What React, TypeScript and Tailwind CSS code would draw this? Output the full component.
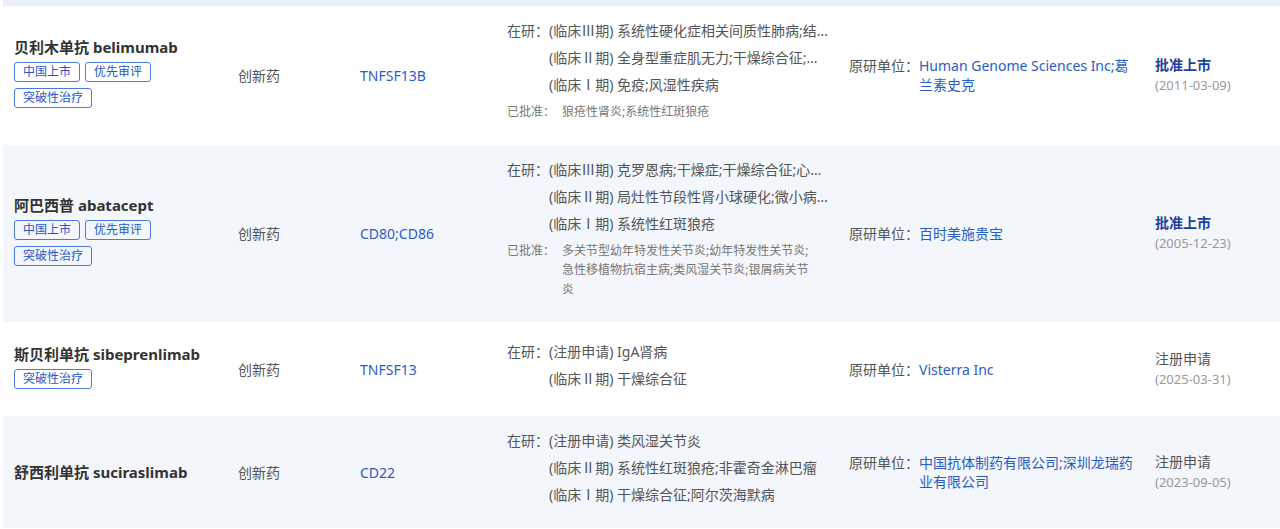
import React from "react";

type Row = {
  cn: string;
  en: string;
  tags: string[];
  type: string;
  target: string;
  research: string[];
  approved?: string;
  org: string;
  status: string;
  statusBold: boolean;
  date: string;
  bg: string;
};

const rows: Row[] = [
  {
    cn: "贝利木单抗",
    en: "belimumab",
    tags: ["中国上市", "优先审评", "突破性治疗"],
    type: "创新药",
    target: "TNFSF13B",
    research: [
      "(临床Ⅲ期) 系统性硬化症相关间质性肺病;结缔组织病相关间质性肺病",
      "(临床Ⅱ期) 全身型重症肌无力;干燥综合征;慢性淋巴细胞白血病",
      "(临床Ⅰ期) 免疫;风湿性疾病",
    ],
    approved: "狼疮性肾炎;系统性红斑狼疮",
    org: "Human Genome Sciences Inc;葛兰素史克",
    status: "批准上市",
    statusBold: true,
    date: "(2011-03-09)",
    bg: "bg-white",
  },
  {
    cn: "阿巴西普",
    en: "abatacept",
    tags: ["中国上市", "优先审评", "突破性治疗"],
    type: "创新药",
    target: "CD80;CD86",
    research: [
      "(临床Ⅲ期) 克罗恩病;干燥症;干燥综合征;心肌炎;溃疡性结肠炎",
      "(临床Ⅱ期) 局灶性节段性肾小球硬化;微小病变病;狼疮性肾炎",
      "(临床Ⅰ期) 系统性红斑狼疮",
    ],
    approved:
      "多关节型幼年特发性关节炎;幼年特发性关节炎;急性移植物抗宿主病;类风湿关节炎;银屑病关节炎",
    org: "百时美施贵宝",
    status: "批准上市",
    statusBold: true,
    date: "(2005-12-23)",
    bg: "bg-[#f3f6fb]",
  },
  {
    cn: "斯贝利单抗",
    en: "sibeprenlimab",
    tags: ["突破性治疗"],
    type: "创新药",
    target: "TNFSF13",
    research: ["(注册申请) IgA肾病", "(临床Ⅱ期) 干燥综合征"],
    org: "Visterra Inc",
    status: "注册申请",
    statusBold: false,
    date: "(2025-03-31)",
    bg: "bg-white",
  },
  {
    cn: "舒西利单抗",
    en: "suciraslimab",
    tags: [],
    type: "创新药",
    target: "CD22",
    research: [
      "(注册申请) 类风湿关节炎",
      "(临床Ⅱ期) 系统性红斑狼疮;非霍奇金淋巴瘤",
      "(临床Ⅰ期) 干燥综合征;阿尔茨海默病",
    ],
    org: "中国抗体制药有限公司;深圳龙瑞药业有限公司",
    status: "注册申请",
    statusBold: false,
    date: "(2023-09-05)",
    bg: "bg-[#f3f6fb]",
  },
];

function Tag({ label }: { label: string }) {
  return (
    <span className="inline-flex h-[20px] items-center rounded-[3px] border border-[#4a7ade] px-[8px] text-[12px] leading-none text-[#2557c8]">
      {label}
    </span>
  );
}

function DataRow({ r }: { r: Row }) {
  return (
    <div className={`flex min-h-[94px] items-center py-[13px] pl-[11px] ${r.bg}`}>
      <div className="w-[224px] shrink-0 pr-[24px]">
        <div className="text-[15px] font-bold leading-[22px] text-[#333]">
          {r.cn} {r.en}
        </div>
        {r.tags.length > 0 && (
          <div className="mt-[4px] mb-[6px] flex flex-wrap gap-x-[5px] gap-y-[6px]">
            {r.tags.map((t) => (
              <Tag key={t} label={t} />
            ))}
          </div>
        )}
      </div>
      <div className="w-[122px] shrink-0 text-[14px] text-[#555]">{r.type}</div>
      <div className="w-[147px] shrink-0 text-[14px] text-[#2b5cc4]">{r.target}</div>
      <div className="flex w-[342px] shrink-0 flex-col gap-[7px] pt-[2px] pb-[10px]">
        {r.research.map((line, i) => (
          <div key={i} className="flex w-[322px] text-[14px] leading-[20px] text-[#555]">
            <span className="w-[42px] shrink-0">{i === 0 ? "在研：" : ""}</span>
            <span className="min-w-0 flex-1 truncate">{line}</span>
          </div>
        ))}
        {r.approved && (
          <div className="flex text-[12px] leading-[19.5px] text-[#777]">
            <span className="w-[55px] shrink-0">已批准：</span>
            <span className="w-[253px]">{r.approved}</span>
          </div>
        )}
      </div>
      <div className="flex w-[306px] shrink-0 text-[14px] leading-[19px]">
        <span className="shrink-0 text-[#555]">原研单位：</span>
        <span className="w-[218px] text-[#2b5cc4]">{r.org}</span>
      </div>
      <div className="flex flex-col">
        <span
          className={
            r.statusBold
              ? "text-[14px] font-bold leading-[21px] text-[#1f3fa0]"
              : "text-[14px] leading-[21px] text-[#555]"
          }
        >
          {r.status}
        </span>
        <span className="text-[13px] leading-[21px] text-[#999]">{r.date}</span>
      </div>
    </div>
  );
}

export default function App() {
  return (
    <div className="h-[529px] w-[1280px] overflow-hidden bg-white pl-[3px] font-['Noto_Sans','Noto_Sans_CJK_SC',sans-serif]">
      <div className="h-[6px] bg-[#e9eef8]" />
      {rows.map((r, i) => (
        <DataRow key={i} r={r} />
      ))}
    </div>
  );
}
